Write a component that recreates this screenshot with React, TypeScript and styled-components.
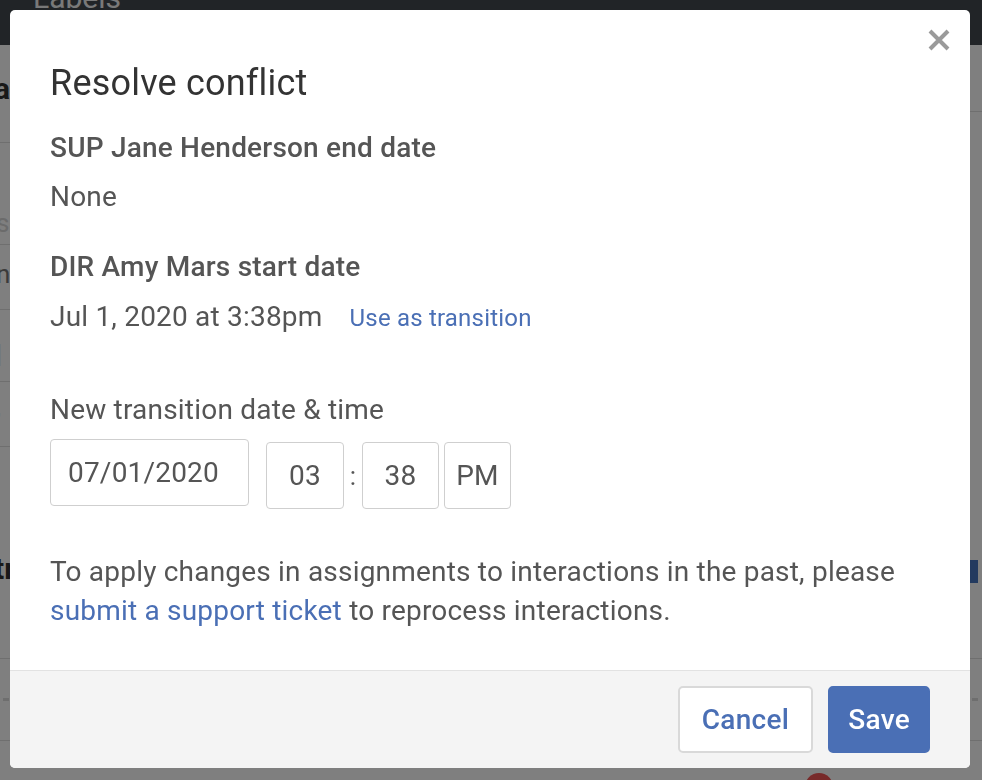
import React from "react";
import styled, { createGlobalStyle } from "styled-components";

const GlobalStyle = createGlobalStyle`
  html, body { margin: 0; padding: 0; }
  body {
    font-family: Roboto, "Noto Sans", "Liberation Sans", Arial, sans-serif;
    background: #ffffff;
    overflow: hidden;
  }
  * { box-sizing: border-box; }
`;

/* ---------- background page (dimmed) ---------- */

const Page = styled.div`
  height: 780px;
  display: flex;
  flex-direction: column;
  background: #ffffff;
  overflow: hidden;
`;

const TopBar = styled.header`
  height: 45px;
  flex-shrink: 0;
  background: #42484f;
  padding-left: 33px;
  overflow: hidden;
`;

const TopBarLabel = styled.span`
  display: block;
  font-size: 30px;
  line-height: 30px;
  color: #f2f2f2;
  margin-top: -17px;
`;

const PageTop = styled.div`
  height: 613px;
  flex-shrink: 0;
  display: flex;
`;

const LeftColumn = styled.div`
  width: 480px;
  display: flex;
  flex-direction: column;
`;

const RightColumn = styled.div`
  flex: 1;
  display: flex;
  flex-direction: column;
`;

const PageRow = styled.div<{ $h?: number; $pad: number; $border?: boolean }>`
  ${(p) => (p.$h ? `height: ${p.$h}px; flex-shrink: 0;` : "flex: 1;")}
  display: flex;
  align-items: flex-end;
  padding-bottom: ${(p) => p.$pad}px;
  border-bottom: ${(p) => (p.$border ? "1px solid #dedede" : "none")};
`;

const PageHeading = styled.span`
  font-size: 30px;
  font-weight: 700;
  color: #333;
  line-height: 1;
  margin-left: -6px;
`;

const PageText = styled.span<{ $tone: string }>`
  font-size: 26px;
  line-height: 1;
  color: ${(p) => p.$tone};
  margin-left: -4px;
`;

const RightHeader = styled.div`
  height: 67px;
  flex-shrink: 0;
  border-bottom: 1px solid #dedede;
`;

const RightSpacer = styled.div`
  height: 448px;
  flex-shrink: 0;
`;

const RightBlock = styled.div`
  height: 23px;
  display: flex;
  justify-content: flex-end;
  padding-right: 4px;
`;

const BlueTab = styled.div`
  width: 8px;
  height: 23px;
  background: #4675be;
`;

const TableRow = styled.div`
  height: 83px;
  flex-shrink: 0;
  border-top: 1px solid #dedede;
  border-bottom: 1px solid #dedede;
  display: flex;
  align-items: center;
  justify-content: space-between;
  padding: 0 4px 0 3px;
`;

const Dash = styled.span`
  width: 6px;
  height: 3px;
  background: #dcdcdc;
`;

const BadgeRow = styled.div`
  flex: 1;
  padding: 32px 0 0 805px;
`;

const Badge = styled.span`
  display: block;
  width: 28px;
  height: 28px;
  border-radius: 50%;
  background: #f05454;
`;

/* ---------- modal ---------- */

const Backdrop = styled.div`
  position: fixed;
  inset: 0;
  background: rgba(0, 0, 0, 0.5);
  display: flex;
  padding: 10px 12px 12px 10px;
`;

const Dialog = styled.div`
  position: relative;
  flex: 1;
  display: flex;
  flex-direction: column;
  background: #ffffff;
  border-radius: 5px;
  overflow: hidden;
`;

const CloseButton = styled.button`
  position: absolute;
  top: 19px;
  right: 20px;
  width: 22px;
  height: 22px;
  padding: 0;
  border: 0;
  background: none;
  cursor: pointer;
  display: flex;
`;

const Body = styled.div`
  flex: 1;
  padding: 52px 40px 0;
  color: #555;
  letter-spacing: 0.2px;
`;

const Title = styled.h2`
  margin: 0;
  font-size: 36px;
  line-height: 43px;
  font-weight: 400;
  color: #333;
`;

const Section = styled.section<{ $gap: number }>`
  margin-top: ${(p) => p.$gap}px;
`;

const FieldLabel = styled.div`
  font-size: 28px;
  line-height: 39px;
  font-weight: 500;
  color: #555;
`;

const FieldValue = styled.div<{ $gap: number }>`
  margin-top: ${(p) => p.$gap}px;
  font-size: 28px;
  line-height: 39px;
  color: #555;
  display: flex;
  align-items: baseline;
`;

const InlineLink = styled.a`
  margin-left: 27px;
  font-size: 24px;
  color: #4a6fb5;
  text-decoration: none;
`;

const PlainText = styled.div`
  font-size: 28px;
  line-height: 39px;
  color: #555;
`;

const InputsRow = styled.div`
  margin-top: 10px;
  display: flex;
  align-items: flex-start;
`;

const DateBox = styled.div`
  width: 199px;
  height: 67px;
  border: 1px solid #cfcfcf;
  border-radius: 4px;
  padding-left: 17px;
  display: flex;
  align-items: center;
  font-size: 28px;
  color: #555;
`;

const TimeGroup = styled.div`
  margin-left: 17px;
  padding-top: 3px;
  display: flex;
  align-items: center;
`;

const TimeBox = styled.div<{ $w: number }>`
  width: ${(p) => p.$w}px;
  height: 67px;
  border: 1px solid #cfcfcf;
  border-radius: 4px;
  display: flex;
  align-items: center;
  justify-content: center;
  font-size: 28px;
  color: #555;
`;

const Colon = styled.span`
  width: 18px;
  text-align: center;
  font-size: 26px;
  color: #555;
`;

const Gap = styled.span`
  width: 5px;
`;

const Notice = styled.p`
  margin: 43px 0 0;
  font-size: 28px;
  line-height: 39px;
  color: #555;
`;

const TextLink = styled.a`
  color: #4a6fb5;
  text-decoration: none;
`;

const Footer = styled.footer`
  height: 98px;
  flex-shrink: 0;
  border-top: 1px solid #e2e2e2;
  background: #f4f4f4;
  display: flex;
  align-items: center;
  justify-content: flex-end;
  gap: 15px;
  padding: 0 40px;
`;

const Button = styled.button<{ $primary?: boolean }>`
  height: 67px;
  padding: 0 ${(p) => (p.$primary ? 18 : 22)}px;
  border-radius: 5px;
  border: 2px solid ${(p) => (p.$primary ? "#4a6fb5" : "#d9d9d9")};
  background: ${(p) => (p.$primary ? "#4a6fb5" : "#ffffff")};
  color: ${(p) => (p.$primary ? "#ffffff" : "#4a6fb5")};
  font-family: inherit;
  font-size: 28px;
  font-weight: 500;
  letter-spacing: 0.3px;
  cursor: pointer;
`;

export default function App() {
  return (
    <>
      <GlobalStyle />
      <Page>
        <TopBar>
          <TopBarLabel>Labels</TopBarLabel>
        </TopBar>
        <PageTop>
          <LeftColumn>
            <PageRow $h={98} $pad={38} $border>
              <PageHeading>assignments</PageHeading>
            </PageRow>
            <PageRow $h={102} $pad={8} $border>
              <PageText $tone="#d6d6d6">search</PageText>
            </PageRow>
            <PageRow $h={65} $pad={22} $border>
              <PageText $tone="#777">none</PageText>
            </PageRow>
            <PageRow $h={72} $pad={14} $border>
              <PageText $tone="#cfcfcf">|</PageText>
            </PageRow>
            <PageRow $h={65} $pad={26} $border>
              <PageText $tone="#cfcfcf">,</PageText>
            </PageRow>
            <PageRow $pad={74}>
              <PageHeading>transitions</PageHeading>
            </PageRow>
          </LeftColumn>
          <RightColumn>
            <RightHeader />
            <RightSpacer />
            <RightBlock>
              <BlueTab />
            </RightBlock>
          </RightColumn>
        </PageTop>
        <TableRow>
          <Dash />
          <Dash />
        </TableRow>
        <BadgeRow>
          <Badge />
        </BadgeRow>
      </Page>

      <Backdrop>
        <Dialog role="dialog" aria-label="Resolve conflict">
          <CloseButton aria-label="Close">
            <svg width="22" height="22" viewBox="0 0 22 22">
              <path d="M2 2 L20 20 M20 2 L2 20" stroke="#9a9a9a" strokeWidth="4" />
            </svg>
          </CloseButton>
          <Body>
            <Title>Resolve conflict</Title>
            <Section $gap={23}>
              <FieldLabel>SUP Jane Henderson end date</FieldLabel>
              <FieldValue $gap={10}>None</FieldValue>
            </Section>
            <Section $gap={31}>
              <FieldLabel>DIR Amy Mars start date</FieldLabel>
              <FieldValue $gap={11}>
                Jul 1, 2020 at 3:38pm
                <InlineLink href="#">Use as transition</InlineLink>
              </FieldValue>
            </Section>
            <Section $gap={52}>
              <PlainText>New transition date &amp; time</PlainText>
              <InputsRow>
                <DateBox>07/01/2020</DateBox>
                <TimeGroup>
                  <TimeBox $w={78}>03</TimeBox>
                  <Colon>:</Colon>
                  <TimeBox $w={77}>38</TimeBox>
                  <Gap />
                  <TimeBox $w={67}>PM</TimeBox>
                </TimeGroup>
              </InputsRow>
            </Section>
            <Notice>
              To apply changes in assignments to interactions in the past, please
              <br />
              <TextLink href="#">submit a support ticket</TextLink> to reprocess interactions.
            </Notice>
          </Body>
          <Footer>
            <Button>Cancel</Button>
            <Button $primary>Save</Button>
          </Footer>
        </Dialog>
      </Backdrop>
    </>
  );
}
